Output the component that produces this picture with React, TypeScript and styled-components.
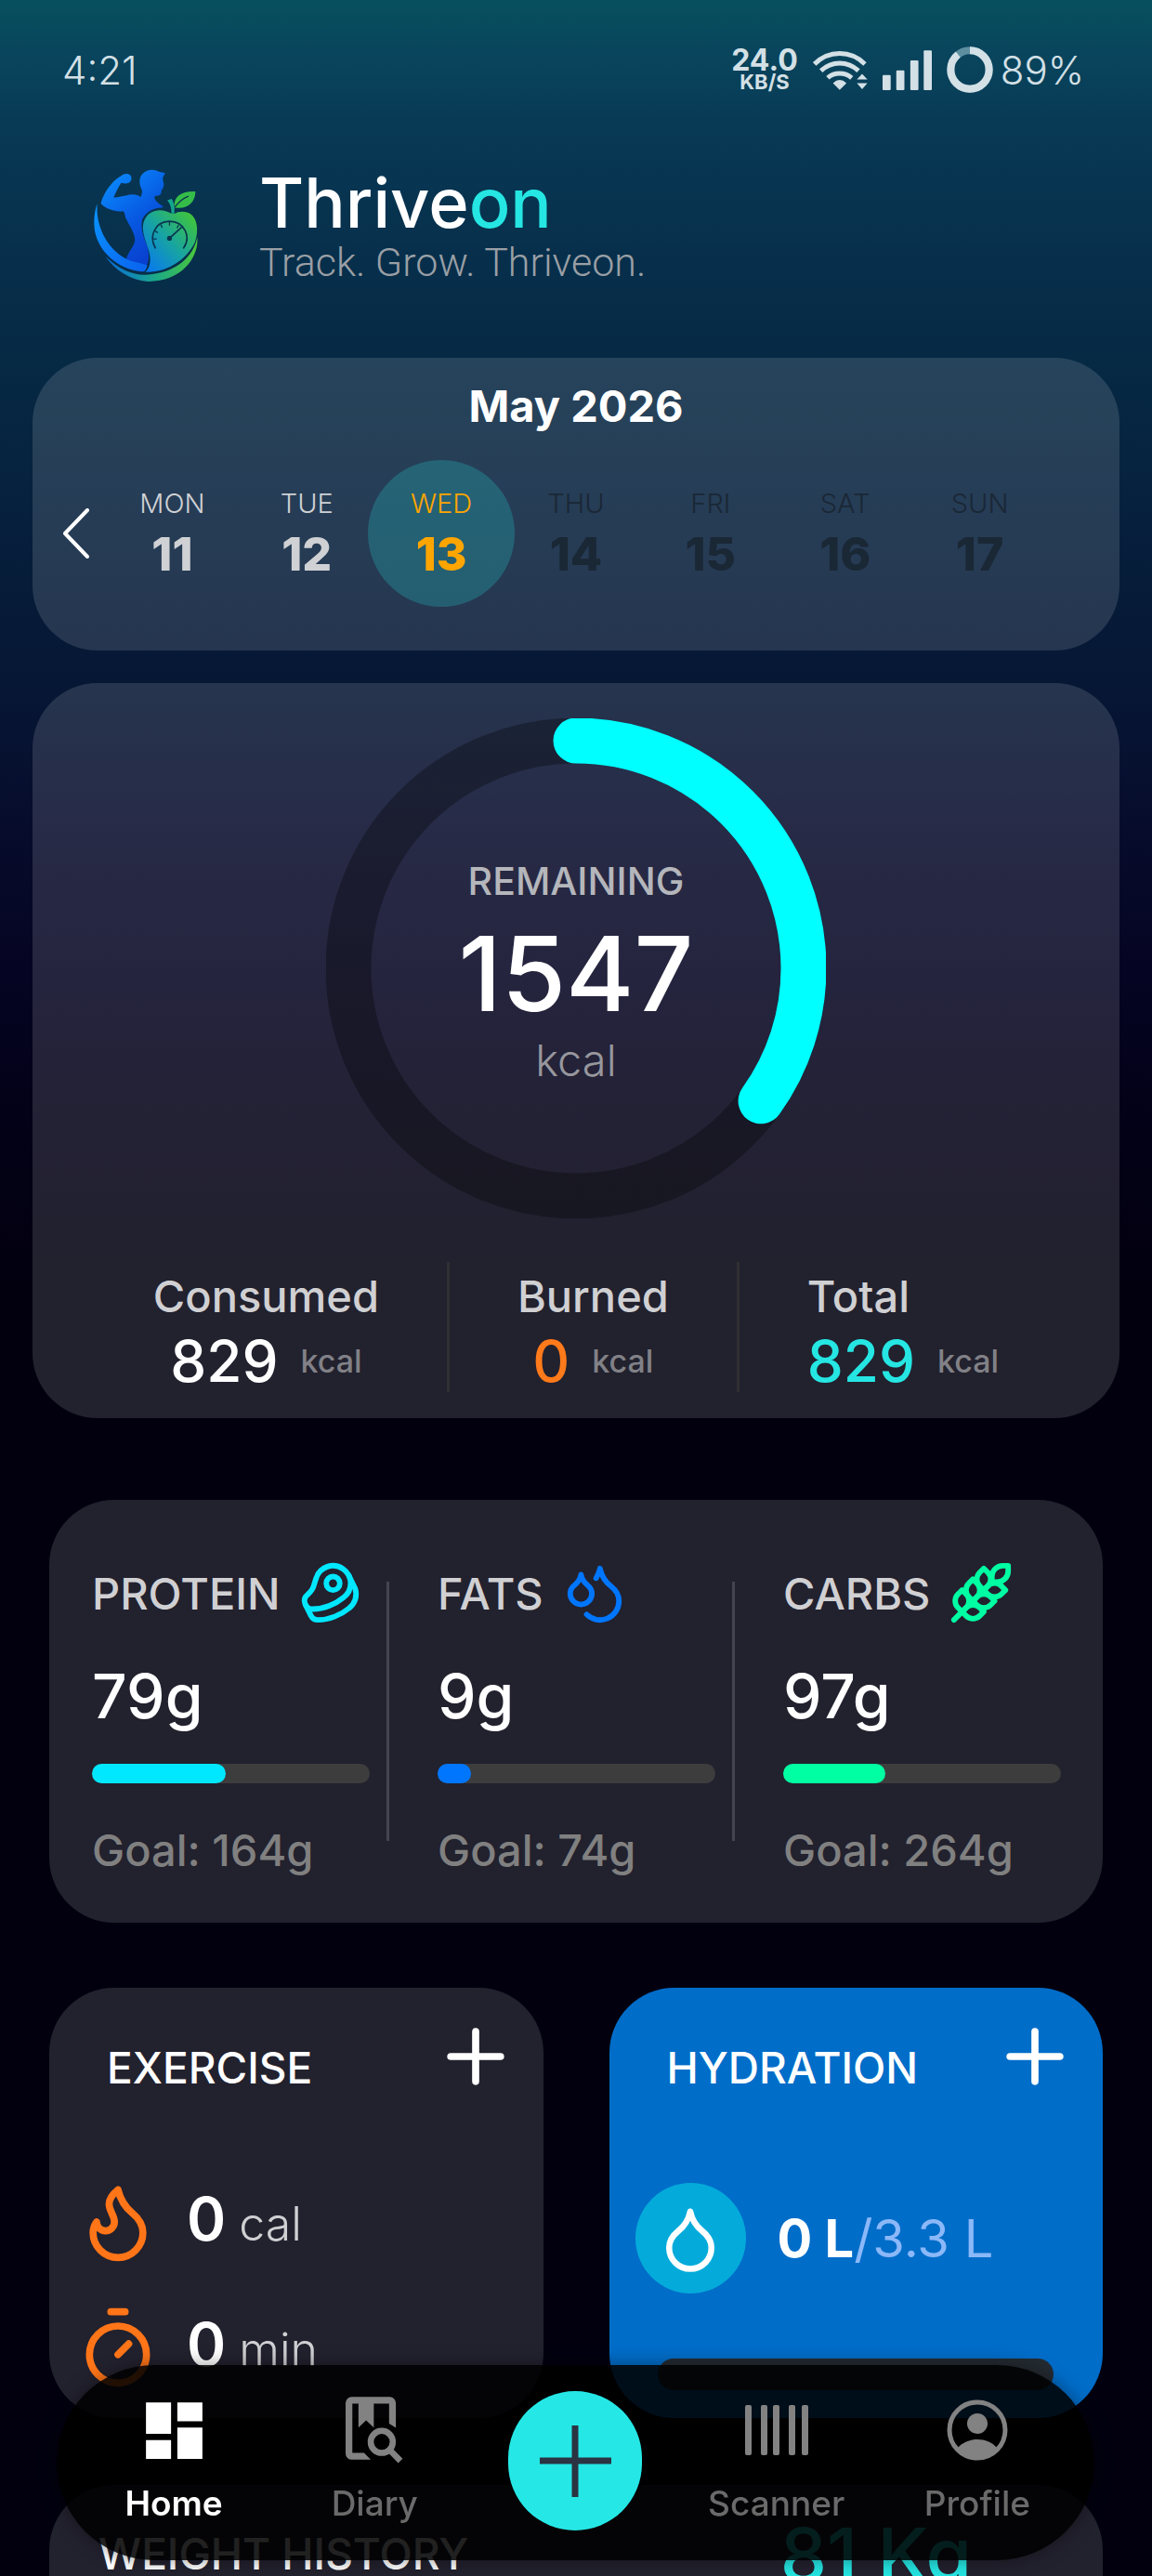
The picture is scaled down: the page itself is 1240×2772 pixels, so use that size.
import React from "react";
import styled, { createGlobalStyle } from "styled-components";
import { Beef, Droplet, Droplets, Flame, Plus, Timer, Wheat } from "lucide-react";
import { MdDashboard } from "react-icons/md";

const days = [
  { name: "MON", date: 11, state: "past" },
  { name: "TUE", date: 12, state: "past" },
  { name: "WED", date: 13, state: "active" },
  { name: "THU", date: 14, state: "future" },
  { name: "FRI", date: 15, state: "future" },
  { name: "SAT", date: 16, state: "future" },
  { name: "SUN", date: 17, state: "future" },
];

const macros = [
  { name: "PROTEIN", amount: 79, goal: 164, color: "#00e8ff", Icon: Beef },
  { name: "FATS", amount: 9, goal: 74, color: "#0076ff", Icon: Droplets },
  { name: "CARBS", amount: 97, goal: 264, color: "#00ffa3", Icon: Wheat },
];

const RING_RADIUS = 245;
const RING_LENGTH = 2 * Math.PI * RING_RADIUS;
const consumed = 829;
const remaining = 1547;

function WifiIcon() {
  return (
    <svg width="59" height="43" viewBox="282 97 176 130" fill="none" stroke="#d3e0e6" strokeWidth="15">
      <path d="M286 142C332 96 404 96 450 142" />
      <path d="M307 164C342 131 394 131 429 164" />
      <path d="M329 187C350 168 385 168 407 187" />
      <path d="M346 204Q368 184 390 204L368 226Z" fill="#d3e0e6" stroke="none" />
      <path d="M441 174l17 18h-34zM424 204h34l-17 20z" fill="#d3e0e6" stroke="none" />
    </svg>
  );
}

function SignalIcon() {
  return (
    <svg width="53" height="43" viewBox="508 97 158 128" fill="#d3e0e6">
      <rect x="508" y="177" width="26" height="48" rx="3" />
      <rect x="552" y="162" width="26" height="63" rx="3" />
      <rect x="597" y="130" width="26" height="95" rx="3" />
      <rect x="640" y="98" width="26" height="127" rx="3" />
    </svg>
  );
}

function BatteryIcon() {
  return (
    <svg width="50" height="50" viewBox="0 0 150 150" fill="none" strokeWidth="24">
      <circle cx="75" cy="75" r="62" stroke="#5d8fa0" />
      <circle
        cx="75"
        cy="75"
        r="62"
        stroke="#d3e0e6"
        pathLength="100"
        strokeDasharray="89 100"
        transform="rotate(-90 75 75)"
      />
    </svg>
  );
}

function Logo() {
  return (
    <svg width="113" height="121" viewBox="62 68 338 364" role="img" aria-label="Thriveon logo">
      <defs>
        <linearGradient id="body" x1="80" y1="100" x2="270" y2="330" gradientUnits="userSpaceOnUse">
          <stop offset="0" stopColor="#0a8dff" />
          <stop offset="0.6" stopColor="#0757e0" />
          <stop offset="1" stopColor="#0840cf" />
        </linearGradient>
        <linearGradient id="swoosh" x1="62" y1="200" x2="220" y2="390" gradientUnits="userSpaceOnUse">
          <stop offset="0" stopColor="#0a93ff" />
          <stop offset="1" stopColor="#0a66ee" />
        </linearGradient>
        <linearGradient id="apple" x1="220" y1="380" x2="390" y2="230" gradientUnits="userSpaceOnUse">
          <stop offset="0" stopColor="#0878f0" />
          <stop offset="0.5" stopColor="#17a3a4" />
          <stop offset="1" stopColor="#3fc43c" />
        </linearGradient>
        <linearGradient id="crescent" x1="110" y1="370" x2="390" y2="330" gradientUnits="userSpaceOnUse">
          <stop offset="0" stopColor="#0a6fd8" />
          <stop offset="0.5" stopColor="#1ca888" />
          <stop offset="1" stopColor="#48c63c" />
        </linearGradient>
      </defs>
      <path
        fill="url(#body)"
        d="M150 90C158 82 172 80 180 88C186 98 182 108 174 112C166 116 158 114 150 112C142 124 132 142 125 160C142 160 160 154 176 151C190 148 204 150 212 158C216 152 218 144 217 136C208 120 206 100 216 86C230 68 256 66 272 76L292 81L286 92C282 100 286 108 288 116C286 126 286 132 280 136C280 146 278 156 262 154C254 158 258 168 268 176C276 182 284 186 286 192C262 192 232 202 218 230C210 264 226 296 234 318C242 344 240 376 226 392C206 394 184 380 166 362C168 340 192 320 194 300C196 280 178 254 166 230C160 216 162 208 156 204C130 208 100 196 84 180C90 150 120 104 150 90Z"
      />
      <path fill="url(#swoosh)" d="M72 180C66 250 104 334 178 364C198 370 226 374 234 380C232 392 226 398 222 400C140 396 64 330 62 246C62 216 66 196 72 180Z" />
      <path fill="url(#crescent)" d="M98 350C150 400 200 416 250 408C330 398 384 350 396 288C402 350 350 432 236 432C180 428 130 396 98 350Z" />
      <path
        fill="url(#apple)"
        d="M312 212C296 204 284 200 268 202C240 204 218 228 220 262C222 300 246 330 243 366C242 384 236 394 228 401C300 404 362 360 388 306C400 270 398 236 378 216C360 202 334 204 324 212Z"
      />
      <path fill="#13a68f" d="M299 169L313 164C322 178 324 196 321 212H312C314 196 308 180 299 169Z" />
      <path fill="#35bd49" d="M322 192C318 160 340 138 390 140C390 176 362 200 322 192Z" />
      <g fill="none" stroke="#0a3550" strokeWidth="4" strokeLinecap="round">
        <path d="M324 190C336 174 350 162 366 156" />
        <path d="M260 323C240 288 256 238 306 237C356 238 376 288 352 323" strokeWidth="5" />
        <path d="M306 240v9M278 248l4 8M259 268l8 5M254 294h9M335 250l-4 7" />
        <path d="M306 292L344 257" strokeWidth="5" />
      </g>
      <circle cx="306" cy="292" r="8" fill="#0a3550" />
    </svg>
  );
}

function DiaryIcon() {
  return (
    <svg width="62" height="72" viewBox="108 65 188 217" fill="#828282">
      <path d="M272 166V85a20 20 0 0 0-20-20H128a20 20 0 0 0-20 20v165a20 20 0 0 0 20 20h62l-22-22h-38V87h20v78l25-23 25 23V87h50v65z" />
      <circle cx="226" cy="212" r="36" fill="none" stroke="#828282" strokeWidth="20" />
      <path d="M251 237l36 37" fill="none" stroke="#828282" strokeWidth="20" />
    </svg>
  );
}

function ScannerIcon() {
  return (
    <svg width="68" height="54" viewBox="0 0 68 54" fill="#828282">
      <rect x="0" width="7" height="54" rx="2" />
      <rect x="17" width="7" height="54" rx="2" />
      <rect x="30" width="7" height="54" rx="2" />
      <rect x="47" width="7" height="54" rx="2" />
      <rect x="61" width="7" height="54" rx="2" />
    </svg>
  );
}

function ProfileIcon() {
  return (
    <svg width="66" height="66" viewBox="0 0 66 66" fill="#828282">
      <circle cx="33" cy="33" r="30" fill="none" stroke="#828282" strokeWidth="5" />
      <circle cx="33" cy="26" r="11" />
      <path d="M12 52C17 46 25 43 33 43S49 46 54 52C48 60 41 63 33 63S18 60 12 52Z" />
    </svg>
  );
}

function App() {
  return (
    <Screen>
      <GlobalStyle />
      <StatusBar>
        <Clock>4:21</Clock>
        <StatusIcons>
          <NetSpeed>
            <b>24.0</b>
            <small>KB/S</small>
          </NetSpeed>
          <WifiIcon />
          <SignalIcon />
          <Battery>
            <BatteryIcon />
            89%
          </Battery>
        </StatusIcons>
      </StatusBar>

      <Header>
        <Logo />
        <div>
          <Brand>
            Thrive<span>on</span>
          </Brand>
          <Tagline>Track. Grow. Thriveon.</Tagline>
        </div>
      </Header>

      <Calendar>
        <Month>May 2026</Month>
        <Week>
          <PrevButton aria-label="Previous week">
            <svg width="30" height="54" viewBox="0 0 30 54" fill="none" stroke="#fff" strokeWidth="4">
              <path d="M27 2L3 27L27 52" strokeLinecap="round" strokeLinejoin="round" />
            </svg>
          </PrevButton>
          {days.map((day) => (
            <Day key={day.name} $state={day.state} disabled={day.state === "future"}>
              <DayName>{day.name}</DayName>
              <DayDate>{day.date}</DayDate>
            </Day>
          ))}
        </Week>
      </Calendar>

      <Calories>
        <Ring>
          <svg width="538" height="538" viewBox="0 0 538 538" fill="none" strokeWidth="49">
            <circle cx="269" cy="269" r={RING_RADIUS} stroke="rgba(0, 0, 0, 0.3)" />
            <circle
              cx="269"
              cy="269"
              r={RING_RADIUS}
              stroke="#00ffff"
              strokeLinecap="round"
              strokeDasharray={`${(RING_LENGTH * consumed) / (consumed + remaining)} ${RING_LENGTH}`}
              transform="rotate(-90 269 269)"
            />
          </svg>
          <RingText>
            <RingLabel>REMAINING</RingLabel>
            <RingValue>{remaining}</RingValue>
            <RingUnit>kcal</RingUnit>
          </RingText>
        </Ring>
        <Stats>
          <Stat>
            <StatLabel>Consumed</StatLabel>
            <StatValue $color="#fff">
              829 <small>kcal</small>
            </StatValue>
          </Stat>
          <Stat>
            <StatLabel>Burned</StatLabel>
            <StatValue $color="#ff7a1a">
              0 <small>kcal</small>
            </StatValue>
          </Stat>
          <Stat $left>
            <StatLabel>Total</StatLabel>
            <StatValue $color="#25e6e3">
              829 <small>kcal</small>
            </StatValue>
          </Stat>
        </Stats>
      </Calories>

      <Macros>
        {macros.map(({ name, amount, goal, color, Icon }) => (
          <Macro key={name}>
            <MacroHead>
              {name}
              <Icon size={70} color={color} />
            </MacroHead>
            <MacroAmount>{amount}g</MacroAmount>
            <Track>
              <Fill $color={color} style={{ width: `${(amount / goal) * 100}%` }} />
            </Track>
            <Goal>Goal: {goal}g</Goal>
          </Macro>
        ))}
      </Macros>

      <Cards>
        <SmallCard>
          <CardHead>
            <CardTitle>EXERCISE</CardTitle>
            <AddButton aria-label="Add exercise">
              <Plus size={92} />
            </AddButton>
          </CardHead>
          <ExerciseList>
            <ExerciseRow>
              <Flame size={92} color="#ff7518" />
              <p>
                <b>0</b> cal
              </p>
            </ExerciseRow>
            <ExerciseRow>
              <Timer size={92} color="#ff7518" />
              <p>
                <b>0</b> min
              </p>
            </ExerciseRow>
          </ExerciseList>
        </SmallCard>
        <SmallCard $blue>
          <CardHead>
            <CardTitle>HYDRATION</CardTitle>
            <AddButton aria-label="Add water">
              <Plus size={92} />
            </AddButton>
          </CardHead>
          <Water>
            <DropBadge>
              <Droplet size={78} />
            </DropBadge>
            <p>
              <b>0 L</b>/3.3 L
            </p>
          </Water>
          <WaterBar />
        </SmallCard>
      </Cards>

      <Weight>
        <CardTitle>WEIGHT HISTORY</CardTitle>
        <WeightValue>81 Kg</WeightValue>
      </Weight>

      <NavBar>
        <NavItem href="#home" $active>
          <NavIcon>
            <MdDashboard size={81} />
          </NavIcon>
          Home
        </NavItem>
        <NavItem href="#diary">
          <NavIcon>
            <DiaryIcon />
          </NavIcon>
          Diary
        </NavItem>
        <NavAdd aria-label="Add">
          <svg width="77" height="77" viewBox="0 0 77 77" stroke="#2b3442" strokeWidth="7">
            <path d="M38 0V77M0 38H77" />
          </svg>
        </NavAdd>
        <NavItem href="#scanner">
          <NavIcon>
            <ScannerIcon />
          </NavIcon>
          Scanner
        </NavItem>
        <NavItem href="#profile">
          <NavIcon>
            <ProfileIcon />
          </NavIcon>
          Profile
        </NavItem>
      </NavBar>
    </Screen>
  );
}

const GlobalStyle = createGlobalStyle`
  * {
    box-sizing: border-box;
  }

  body {
    margin: 0;
    background: #02000f;
    font-family: Inter, "Liberation Sans", sans-serif;
  }

  button {
    padding: 0;
    border: none;
    background: none;
    color: inherit;
    font: inherit;
  }

  h1, h2, p {
    margin: 0;
  }

  svg {
    display: block;
    flex-shrink: 0;
  }
`;

const Screen = styled.main`
  height: 100vh;
  overflow: hidden;
  padding: 0 35px;
  color: #fff;
  background: linear-gradient(
    #07505f 0%,
    #084b5d 1%,
    #09455d 2%,
    #083955 5%,
    #072f4b 10%,
    #062944 14%,
    #061d3a 22%,
    #061634 27%,
    #070c2c 32%,
    #050422 38%,
    #030116 44%,
    #02000f 50%
  );
`;

const StatusBar = styled.div`
  display: flex;
  justify-content: space-between;
  align-items: center;
  height: 150px;
  padding: 0 38px 0 32px;
  color: #d3e0e6;
`;

const Clock = styled.div`
  font-size: 42px;
  font-weight: 300;
`;

const StatusIcons = styled.div`
  display: flex;
  align-items: center;
  gap: 16px;
`;

const NetSpeed = styled.div`
  display: flex;
  flex-direction: column;
  align-items: center;

  b {
    font-size: 32px;
    line-height: 26px;
  }

  small {
    font-size: 22px;
    font-weight: 700;
    line-height: 20px;
  }
`;

const Battery = styled.div`
  display: flex;
  align-items: center;
  gap: 8px;
  font-size: 42px;
  font-weight: 300;
`;

const Header = styled.header`
  display: flex;
  gap: 65px;
  padding: 32px 66px 75px;
`;

const Brand = styled.h1`
  font-size: 74px;
  font-weight: 500;
  line-height: 72px;

  span {
    color: #25e6e3;
  }
`;

const Tagline = styled.p`
  color: #9a9fa5;
  font-family: Roboto, sans-serif;
  font-size: 43px;
  font-weight: 300;
  line-height: 56px;
`;

const Card = styled.section`
  border-radius: 70px;
  background: rgba(255, 255, 255, 0.13);
`;

const Calendar = styled(Card)`
  padding: 24px 0 47px;
`;

const Month = styled.h2`
  font-size: 47px;
  font-weight: 700;
  line-height: 56px;
  text-align: center;
`;

const Week = styled.div`
  display: grid;
  grid-template-columns: 78px repeat(7, 1fr) 78px;
  justify-items: center;
  align-items: center;
  margin-top: 30px;
`;

const PrevButton = styled.button`
  padding-left: 16px;
`;

const dayColors: Record<string, string> = {
  past: "#cfd1d4",
  active: "#ffa500",
  future: "#1a2735",
};

const Day = styled.button<{ $state: string }>`
  display: flex;
  flex-direction: column;
  align-items: center;
  justify-content: center;
  gap: 8px;
  width: 158px;
  height: 158px;
  margin: 0 -7px;
  padding-top: 4px;
  border-radius: 50%;
  color: ${({ $state }) => dayColors[$state]};
  background: ${({ $state }) => ($state === "active" ? "rgba(37, 230, 227, 0.22)" : "none")};
`;

const DayName = styled.span`
  font-size: 29px;
  font-weight: 300;
  line-height: 32px;
`;

const DayDate = styled.span`
  font-size: 50px;
  font-weight: 800;
  line-height: 60px;
`;

const Calories = styled(Card)`
  margin-top: 35px;
  padding: 38px 0 28px;
`;

const Ring = styled.div`
  display: grid;
  place-items: center;

  > * {
    grid-area: 1 / 1;
  }
`;

const RingText = styled.div`
  display: flex;
  flex-direction: column;
  align-items: center;
`;

const RingLabel = styled.div`
  color: #b4b6bb;
  font-size: 41px;
  font-weight: 500;
  line-height: 50px;
`;

const RingValue = styled.div`
  font-size: 112px;
  font-weight: 500;
  line-height: 148px;
`;

const RingUnit = styled.div`
  color: #97979d;
  font-size: 47px;
  font-weight: 300;
  line-height: 40px;
`;

const Stats = styled.div`
  display: flex;
  justify-content: center;
  height: 140px;
  margin-top: 47px;
`;

const Stat = styled.div<{ $left?: boolean }>`
  display: flex;
  flex-direction: column;
  align-items: ${({ $left }) => ($left ? "flex-start" : "center")};
  padding: 8px 73px 0;

  & + & {
    border-left: 3px solid #2f2f32;
  }
`;

const StatLabel = styled.div`
  color: #d0d0d3;
  font-size: 47px;
  font-weight: 500;
  line-height: 58px;
`;

const StatValue = styled.div<{ $color: string }>`
  display: flex;
  align-items: center;
  gap: 24px;
  color: ${({ $color }) => $color};
  font-size: 62px;
  font-weight: 500;
  line-height: 82px;

  small {
    color: #818187;
    font-size: 34px;
  }
`;

const Macros = styled(Card)`
  display: flex;
  margin: 88px 18px 0;
  padding: 68px 45px 48px 46px;
`;

const Macro = styled.div`
  flex: 1;

  & + & {
    position: relative;
    margin-left: 73px;
  }

  & + &::before {
    content: "";
    position: absolute;
    top: 20px;
    bottom: 40px;
    left: -55px;
    width: 3px;
    background: #44444e;
  }
`;

const MacroHead = styled.div`
  display: flex;
  align-items: center;
  gap: 20px;
  height: 64px;
  color: #d0d0d3;
  font-size: 47px;
  font-weight: 500;
`;

const MacroAmount = styled.div`
  margin: 37px 0 31px;
  font-size: 66px;
  font-weight: 500;
  line-height: 84px;
`;

const Track = styled.div`
  height: 21px;
  border-radius: 11px;
  background: #3d3d3d;
`;

const Fill = styled.div<{ $color: string }>`
  height: 100%;
  border-radius: 11px;
  background: ${({ $color }) => $color};
`;

const Goal = styled.div`
  margin-top: 42px;
  color: #808080;
  font-size: 47px;
  font-weight: 500;
  line-height: 60px;
  white-space: nowrap;
`;

const Cards = styled.div`
  display: grid;
  grid-template-columns: 1fr 1fr;
  gap: 71px;
  margin: 70px 18px 0;
`;

const SmallCard = styled(Card)<{ $blue?: boolean }>`
  padding: 28px 27px 28px 28px;
  ${({ $blue }) => $blue && "background: #006dc9;"}
`;

const CardHead = styled.div`
  display: flex;
  justify-content: space-between;
  padding-left: 34px;

  h2 {
    padding-top: 30px;
  }
`;

const CardTitle = styled.h2`
  font-size: 46px;
  font-weight: 500;
  line-height: 56px;
`;

const AddButton = styled.button`
  height: 92px;
`;

const ExerciseList = styled.div`
  display: flex;
  flex-direction: column;
  gap: 38px;
  margin-top: 83px;
`;

const ExerciseRow = styled.div`
  display: flex;
  align-items: center;
  gap: 28px;

  p {
    color: #d0d0d3;
    font-size: 50px;
    font-weight: 300;
    line-height: 92px;
  }

  b {
    color: #fff;
    font-size: 64px;
    font-weight: 600;
  }
`;

const Water = styled.div`
  display: flex;
  align-items: center;
  gap: 34px;
  margin-top: 90px;

  p {
    color: #8bb8f8;
    font-size: 56px;
    font-weight: 400;
  }

  b {
    color: #fff;
    font-weight: 700;
  }
`;

const DropBadge = styled.div`
  display: flex;
  align-items: center;
  justify-content: center;
  width: 119px;
  height: 119px;
  border-radius: 50%;
  background: #04abda;
`;

const WaterBar = styled.div`
  height: 34px;
  margin: 70px 26px 0 24px;
  border-radius: 17px;
  background: #242b32;
`;

const Weight = styled(Card)`
  display: flex;
  align-items: center;
  justify-content: space-between;
  height: 400px;
  margin: 72px 18px 0;
  padding: 0 141px 252px 53px;
`;

const WeightValue = styled.div`
  color: #25e6e3;
  font-size: 80px;
  font-weight: 500;
`;

const NavBar = styled.nav`
  position: fixed;
  right: 62px;
  bottom: 17px;
  left: 61px;
  display: grid;
  grid-template-columns: repeat(5, 1fr);
  justify-items: center;
  align-items: center;
  height: 210px;
  padding: 0 18px 4px;
  border-radius: 105px;
  background: rgba(0, 0, 0, 0.87);
  box-shadow: 0 0 20px rgba(0, 0, 0, 0.4);
`;

const NavItem = styled.a<{ $active?: boolean }>`
  display: flex;
  flex-direction: column;
  align-items: center;
  gap: 16px;
  padding-bottom: 6px;
  color: ${({ $active }) => ($active ? "#fff" : "#6a6a6a")};
  font-size: 37px;
  font-weight: ${({ $active }) => ($active ? 600 : 500)};
  line-height: 44px;
  text-decoration: none;
`;

const NavIcon = styled.span`
  display: flex;
  align-items: center;
  height: 81px;
`;

const NavAdd = styled.button`
  display: flex;
  align-items: center;
  justify-content: center;
  width: 144px;
  height: 150px;
  border-radius: 72px;
  background: #25e8e6;
`;

export default App;
